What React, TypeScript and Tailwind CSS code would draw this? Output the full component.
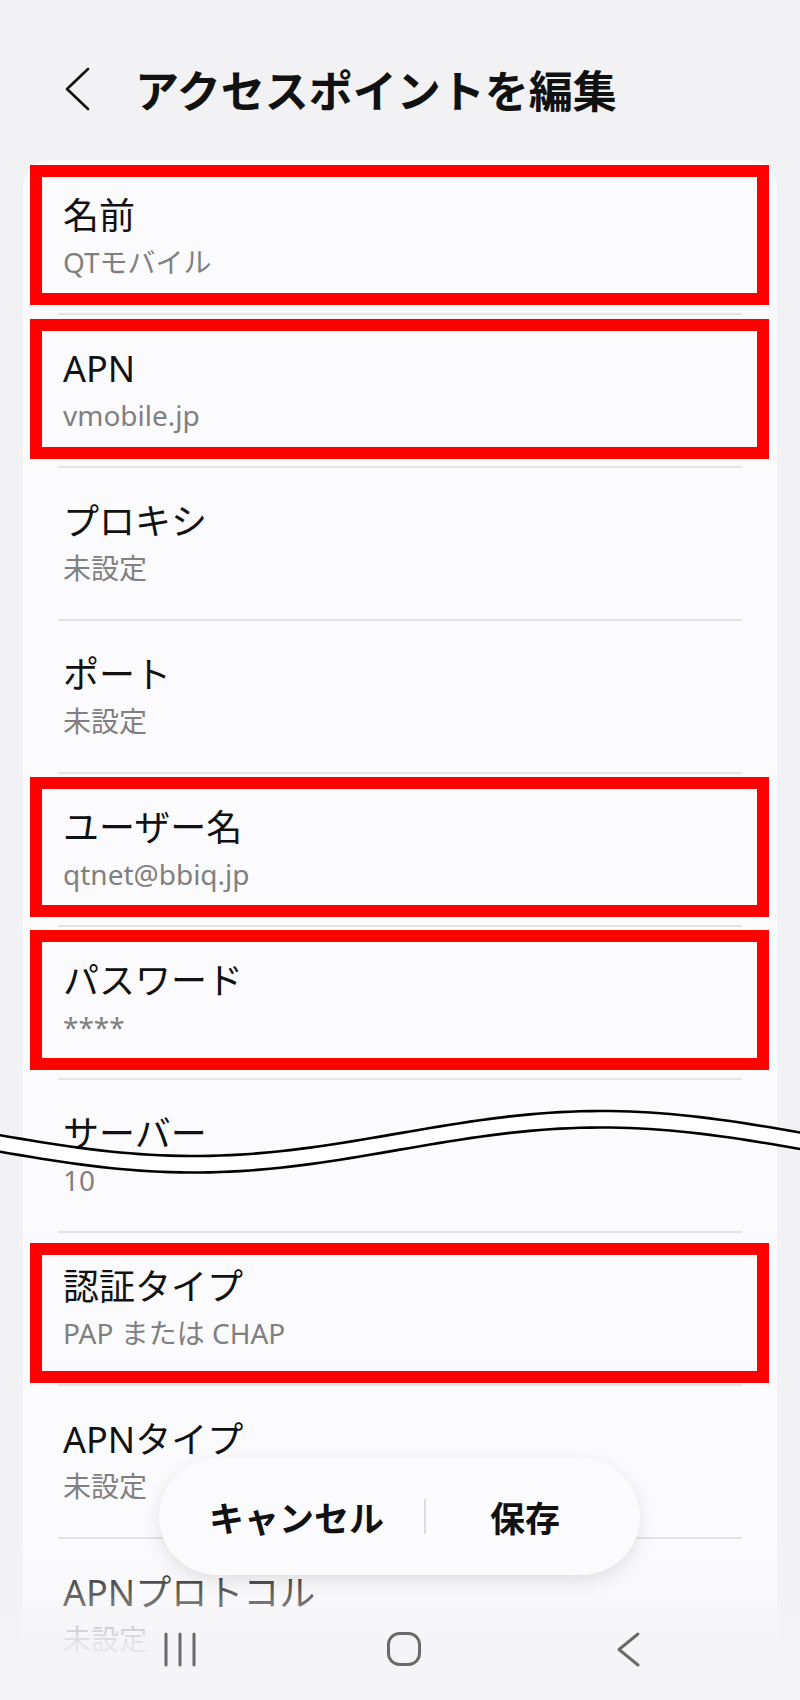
import React from "react";

type Row = { t: string; s: string; box?: string };

const rows: Row[] = [
  { t: "名前", s: "QTモバイル", box: "top-[5px]" },
  { t: "APN", s: "vmobile.jp", box: "top-[4px]" },
  { t: "プロキシ", s: "未設定" },
  { t: "ポート", s: "未設定" },
  { t: "ユーザー名", s: "qtnet@bbiq.jp", box: "top-[3px]" },
  { t: "パスワード", s: "****", box: "top-[3px]" },
  { t: "サーバー", s: "10" },
  { t: "認証タイプ", s: "PAP または CHAP", box: "top-[10px]" },
  { t: "APNタイプ", s: "未設定" },
  { t: "APNプロトコル", s: "未設定" },
];

function curve(offset: number): [number, number][] {
  const pts: [number, number][] = [];
  for (let x = -10; x <= 810; x += 10) {
    const y = 1133.5 + offset + 22.5 * Math.sin((2 * Math.PI * (x + 10)) / 816);
    pts.push([x, y]);
  }
  return pts;
}

const top = curve(0);
const bottom = curve(16.5);
const topD = "M" + top.map(([x, y]) => `${x} ${y.toFixed(2)}`).join(" L");
const bottomD = "M" + bottom.map(([x, y]) => `${x} ${y.toFixed(2)}`).join(" L");
const bandD =
  topD +
  " L" +
  [...bottom].reverse().map(([x, y]) => `${x} ${y.toFixed(2)}`).join(" L") +
  " Z";

export default function App() {
  return (
    <div className="relative w-[800px] h-[1700px] overflow-hidden bg-[#f2f2f4] font-['Noto_Sans','Noto_Sans_CJK_JP',sans-serif]">
      {/* Header */}
      <div className="flex items-center h-[160px] pt-[18px]">
        <svg className="ml-[62px] w-[32px] h-[44px]" viewBox="0 0 32 44">
          <path d="M26 2 L5 22 L26 42" fill="none" stroke="#111" strokeWidth="2.6" strokeLinecap="round" strokeLinejoin="round" />
        </svg>
        <h1 className="ml-[41px] text-[44px] leading-[56px] font-bold text-[#111] font-['Noto_Sans_CJK_JP',sans-serif]">
          アクセスポイントを編集
        </h1>
      </div>

      {/* Card */}
      <div className="mx-[23px] rounded-t-[28px] bg-[#fbfbfd]">
        {rows.map((r, i) => (
          <div key={i}>
            <div className={`relative pl-[40px] pb-[33px] ${i === 0 ? "pt-[34px]" : "pt-[32px]"}`}>
              <div className="text-[36px] leading-[44px] text-[#111]">{r.t}</div>
              <div className="mt-[6px] text-[28px] leading-[36px] text-[#808080]">{r.s}</div>
              {r.box && (
                <div className={`absolute left-[7px] w-[739px] h-[140px] border-[12px] border-[#ff0000] ${r.box}`} />
              )}
            </div>
            {i < rows.length - 1 && <div className="mx-[35px] h-[2px] bg-[#e4e4e6]" />}
          </div>
        ))}
      </div>

      {/* Wavy cut mark */}
      <svg className="absolute left-0 top-0 w-[800px] h-[1700px] pointer-events-none" viewBox="0 0 800 1700">
        <path d={bandD} fill="#ffffff" />
        <path d={topD} fill="none" stroke="#000" strokeWidth="2.6" />
        <path d={bottomD} fill="none" stroke="#000" strokeWidth="2.6" />
      </svg>

      {/* Bottom fade */}
      <div className="absolute left-0 right-0 top-[1545px] bottom-0 bg-[linear-gradient(to_bottom,rgba(244,244,246,0)_0%,rgba(244,244,246,0.4)_35%,rgba(244,244,246,0.88)_65%,rgba(244,244,246,0.97)_100%)]" />

      {/* Floating action pill */}
      <div className="absolute left-[159px] top-[1458px] w-[481px] h-[117px] rounded-full bg-[#fbfbfd] shadow-[0_6px_18px_rgba(0,0,0,0.10)] flex items-center font-['Noto_Sans_CJK_JP',sans-serif]">
        <span className="ml-[50px] text-[35px] font-bold text-[#111] leading-none">キャンセル</span>
        <div className="ml-[40px] w-[2px] h-[35px] bg-[#dcdcde]" />
        <span className="ml-[64px] text-[35px] font-bold text-[#111] leading-none">保存</span>
      </div>

      {/* Navigation bar */}
      <svg className="absolute left-0 top-[1620px] w-[800px] h-[60px]" viewBox="0 1620 800 60">
        <line x1="166" y1="1634" x2="166" y2="1665" stroke="#6a6a6a" strokeWidth="3" strokeLinecap="round" />
        <line x1="180" y1="1634" x2="180" y2="1665" stroke="#6a6a6a" strokeWidth="3" strokeLinecap="round" />
        <line x1="194" y1="1634" x2="194" y2="1665" stroke="#6a6a6a" strokeWidth="3" strokeLinecap="round" />
        <rect x="388.5" y="1633.5" width="31" height="31" rx="11" fill="none" stroke="#6a6a6a" strokeWidth="3" />
        <path d="M638 1634 L619 1649.5 L638 1665" fill="none" stroke="#6a6a6a" strokeWidth="3" strokeLinecap="round" strokeLinejoin="round" />
      </svg>
    </div>
  );
}
